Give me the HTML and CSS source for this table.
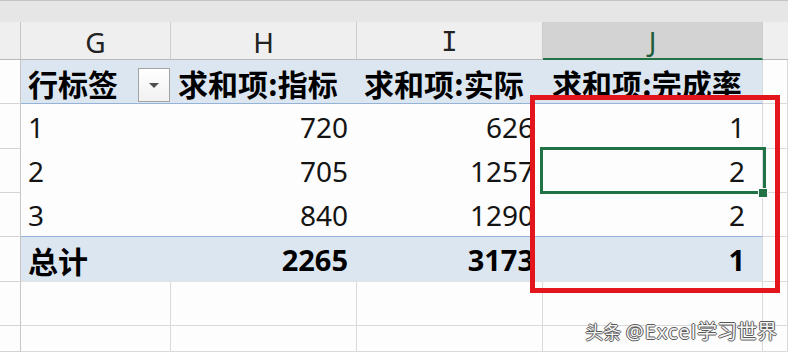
FILE: index.html
```html
<!DOCTYPE html>
<html lang="zh-CN">
<head>
<meta charset="utf-8">
<title>数据透视表</title>
<link rel="stylesheet" href="styles.css">
</head>
<body>
<div class="sheet">
  <div class="topbar"></div>

  <div class="ch corner"></div>
  <div class="ch">G</div>
  <div class="ch">H</div>
  <div class="ch"><span class="letter-i">I</span></div>
  <div class="ch sel">J</div>
  <div class="ch last-col"></div>

  <div class="rh"></div>
  <div class="c ph first">
    <span>行标签</span>
    <span class="dd"><svg width="10" height="6" viewBox="0 0 10 6"><polygon points="0,0 10,0 5,5" fill="#4d4d4d"/></svg></span>
  </div>
  <div class="c ph">求和项:指标</div>
  <div class="c ph">求和项:实际</div>
  <div class="c ph jcol">求和项:完成率</div>
  <div class="c grid"></div>

  <div class="rh"></div>
  <div class="c pd first">1</div>
  <div class="c pd num">720</div>
  <div class="c pd num">626</div>
  <div class="c pd num jcol">1</div>
  <div class="c grid"></div>

  <div class="rh"></div>
  <div class="c pd first">2</div>
  <div class="c pd num">705</div>
  <div class="c pd num">1257</div>
  <div class="c pd num jcol">2</div>
  <div class="c grid"></div>

  <div class="rh"></div>
  <div class="c pd first lastrow">3</div>
  <div class="c pd num lastrow">840</div>
  <div class="c pd num lastrow">1290</div>
  <div class="c pd num jcol lastrow">2</div>
  <div class="c grid"></div>

  <div class="rh"></div>
  <div class="c pt first">总计</div>
  <div class="c pt num">2265</div>
  <div class="c pt num">3173</div>
  <div class="c pt num jcol">1</div>
  <div class="c grid"></div>

  <div class="rh"></div>
  <div class="c grid"></div>
  <div class="c grid"></div>
  <div class="c grid"></div>
  <div class="c grid"></div>
  <div class="c grid"></div>

  <div class="rh"></div>
  <div class="c grid"></div>
  <div class="c grid"></div>
  <div class="c grid"></div>
  <div class="c grid"></div>
  <div class="c grid"></div>
</div>

<div class="redbox"></div>
<div class="selection"></div>
<div class="handle"></div>
<div class="watermark"><span class="wm-logo">头条</span> <span class="wm-at">@Excel</span>学习世界</div>
</body>
</html>
```

FILE: styles.css
```css
* { box-sizing: border-box; }

html, body {
  margin: 0;
  padding: 0;
  width: 788px;
  height: 352px;
  overflow: hidden;
  background: #fdfdfd;
}

body {
  position: relative;
  font-family: "Noto Sans", "Noto Sans CJK SC", sans-serif;
  color: #141414;
}

.sheet {
  display: grid;
  grid-template-columns: 21px 150px 186px 186px 220px 1fr;
  grid-template-rows: 22px 38px 44px 45px 44px 44px 45px 44px 26px;
}

.topbar {
  grid-column: 1 / -1;
  background: #e6e6e6;
  border-top: 1px solid #c4c4c4;
}

.ch {
  background: #efefef;
  border-bottom: 1px solid #b9b9b9;
  border-right: 1px solid #cdcdcd;
  display: flex;
  align-items: center;
  justify-content: center;
  font-size: 28px;
  color: #222;
  padding-top: 2px;
}

.ch.corner { border-right-color: #c6c6c6; }
.ch.last-col { border-right: none; }

.ch.sel {
  background: #d3d3d3;
  border-bottom: 2px solid #217346;
  color: #1d5e39;
}

.letter-i {
  font-family: "DejaVu Sans Mono", monospace;
  font-size: 27px;
}

.rh {
  background: #fdfdfd;
  border-right: 1px solid #c6c6c6;
  border-bottom: 1px solid #d4d4d4;
}

.c {
  display: flex;
  align-items: center;
  white-space: nowrap;
  overflow: hidden;
}

.grid {
  border-right: 1px solid #dadada;
  border-bottom: 1px solid #dadada;
  background: #fdfdfd;
}

/* pivot header */
.ph {
  background: #dce6f1;
  border-bottom: 1px solid #95b3d7;
  font-family: "Noto Sans CJK SC", sans-serif;
  font-weight: 700;
  font-size: 30px;
  color: #000;
  padding-left: 7px;
  padding-top: 3px;
}

.ph.first {
  justify-content: space-between;
  padding-right: 1px;
}

.ph.jcol { padding-left: 9px; }

.dd {
  align-self: flex-end;
  width: 32px;
  height: 34px;
  margin-bottom: 1px;
  border: 1px solid #a3a3a3;
  background: linear-gradient(#ffffff, #f1f1f1);
  display: flex;
  align-items: center;
  justify-content: center;
  padding-top: 1px;
}

.dd svg { display: block; }

/* pivot data */
.pd {
  background: #fdfdfd;
  font-size: 28px;
  padding-left: 7px;
}

.pd.lastrow { border-bottom: 1px solid #95b3d7; }

.num {
  justify-content: flex-end;
  padding-left: 0;
  padding-right: 9px;
}

.jcol {
  border-right: 1px solid #dadada;
}

.num.jcol { padding-right: 17px; }

/* totals */
.pt {
  background: #dce6f1;
  font-weight: 700;
  font-size: 29px;
  color: #000;
  padding-left: 7px;
  border-bottom: 1px solid #e2e2e2;
}

.pt.first {
  font-family: "Noto Sans CJK SC", sans-serif;
  font-size: 30px;
  padding-top: 2px;
}

.pt.num { padding-left: 0; }

/* overlays */
.redbox {
  position: absolute;
  left: 530px;
  top: 95px;
  width: 250px;
  height: 198px;
  border: 5px solid #e2161c;
}

.selection {
  position: absolute;
  left: 540px;
  top: 147px;
  width: 226px;
  height: 47px;
  border: 3px solid #217346;
}

.handle {
  position: absolute;
  left: 758px;
  top: 188px;
  width: 10px;
  height: 10px;
  background: #217346;
  border: 1px solid #fdfdfd;
}

.watermark {
  position: absolute;
  right: 11px;
  top: 318px;
  font-family: "Noto Sans CJK SC", sans-serif;
  font-size: 20px;
  line-height: 26px;
  color: #f4f4f4;
  text-shadow: 1px 0 0 #5a5a5a, -1px 0 0 #5a5a5a, 0 1px 0 #5a5a5a, 0 -1px 0 #5a5a5a;
  white-space: nowrap;
}

.wm-logo { font-size: 18px; }
.wm-at { font-family: "Noto Sans", sans-serif; letter-spacing: 1px; }
```
